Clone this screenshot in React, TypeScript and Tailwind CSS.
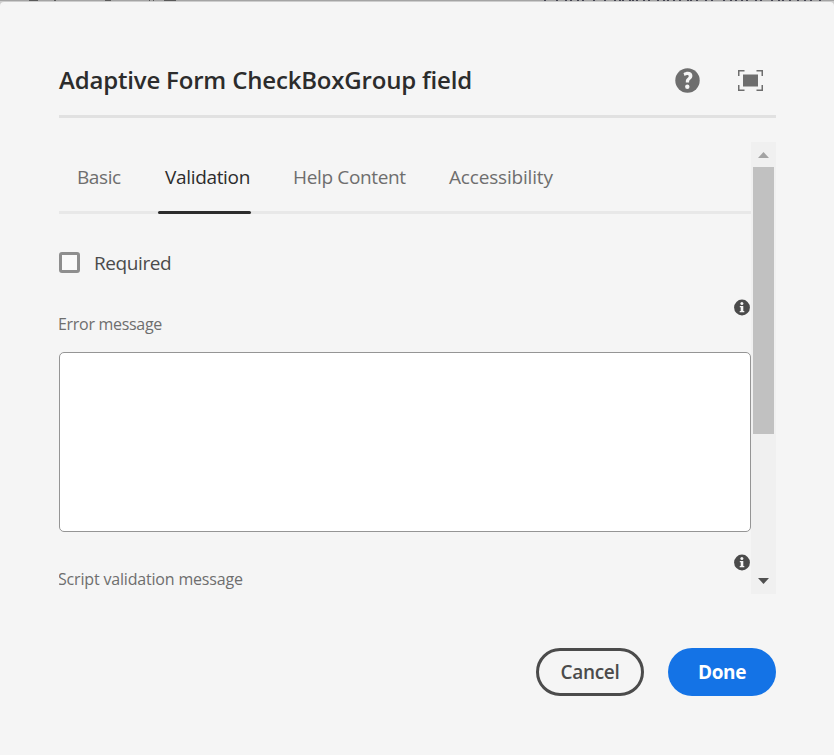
function HelpIcon() {
  return (
    <svg width="25" height="25" viewBox="0 0 25 25" className="block">
      <circle cx="12.5" cy="12.5" r="12.2" fill="#6e6e6e" />
      <path
        d="M8.5 5.3C9.7 4.3 11.2 3.8 12.8 3.8c2.8 0 4.6 1.6 4.6 3.9 0 1.8-.9 2.8-2 3.7-.9.8-1.3 1.3-1.3 2.3v.9h-3.3v-1.2c0-1.7.6-2.5 1.7-3.4.9-.8 1.2-1.1 1.2-1.8 0-.8-.5-1.2-1.4-1.2-.9 0-1.9.4-2.7.9z"
        fill="#f5f5f5"
      />
      <circle cx="12.3" cy="18.8" r="2.2" fill="#f5f5f5" />
    </svg>
  );
}

function FullScreenIcon() {
  return (
    <svg width="25" height="21" viewBox="0 0 25 21" className="block">
      <path d="M.75 6V.75H6.5M18.5.75h5.75V6M24.25 15v5.25H18.5M6.5 20.25H.75V15" fill="none" stroke="#6e6e6e" strokeWidth="1.5" />
      <rect x="5" y="4.5" width="15" height="12" fill="#6e6e6e" />
    </svg>
  );
}

function InfoIcon() {
  return (
    <svg width="16" height="17" viewBox="0 0 16 17" className="block">
      <circle cx="8" cy="8.5" r="7.9" fill="#4b4b4b" />
      <circle cx="7.9" cy="4.5" r="1.5" fill="#f5f5f5" />
      <path d="M5.8 6.9h3.5v5h1v1.4H5.7v-1.4h1V8.3h-.9z" fill="#f5f5f5" />
    </svg>
  );
}

const behindLeft: [number, number][] = [[29, 9], [54, 2], [105, 6], [149, 1], [153, 1], [164, 12]];
const behindRight = [
  544, 556, 565, 570, 577, 582, 593, 604, 614, 619, 622, 629, 632, 636, 643, 648, 657, 663, 667, 673, 679, 687, 690,
  696, 705, 711, 723, 730, 735, 741, 746, 755, 760, 771, 778, 782, 789, 797, 804, 810, 819,
];

function Backdrop() {
  return (
    <div className="h-0.5 w-full bg-[#cdcdcd]">
      <svg width="834" height="1" className="block bg-[#a4a4a4]" shapeRendering="crispEdges">
        {behindLeft.map(([x, w]) => (
          <rect key={x} x={x} y="0" width={w} height="1" fill="#595959" />
        ))}
        {behindRight.map((x) => (
          <rect key={x} x={x} y="0" width="2" height="1" fill="#42424f" />
        ))}
      </svg>
    </div>
  );
}

function Field({ label, tracking }: { label: string; tracking: string }) {
  return (
    <div className="flex h-[37px] items-start justify-between">
      <label className={`-ml-px mt-[13px] text-base leading-6 text-[#6e6e6e] ${tracking}`}>{label}</label>
      <span className="mr-px">
        <InfoIcon />
      </span>
    </div>
  );
}

const tab = "h-full whitespace-nowrap";

export default function App() {
  return (
    <div className="flex h-[755px] w-[834px] flex-col overflow-hidden bg-[#cdcdcd] font-['Open_Sans',sans-serif]">
      <Backdrop />
      <main className="flex-1 rounded-t-sm bg-[#f5f5f5] pl-[59px] pr-[58px] pt-[50px]">
        <header className="flex h-[66px] items-start justify-between border-b-3 border-[#e1e1e1]">
          <h1 className="mt-2.5 whitespace-nowrap text-2xl leading-9 font-semibold tracking-[-0.18px] text-[#2c2c2c]">
            Adaptive Form CheckBoxGroup field
          </h1>
          <div className="mr-[13px] mt-4 flex items-center gap-[38px]">
            <button aria-label="Help"><HelpIcon /></button>
            <button aria-label="Full screen"><FullScreenIcon /></button>
          </div>
        </header>

        <div className="mt-6 flex h-[452px] overflow-hidden">
          <section className="w-[692px]">
            <nav className="flex h-[72px] border-b-3 border-[#e8e8e8] pl-[18px] text-[19px] leading-[70px] text-[#6e6e6e]">
              <span className={`${tab} w-[81px] tracking-[-0.4px]`}>Basic</span>
              <span className="h-[72px] w-[93px] whitespace-nowrap pl-[7px] tracking-[-0.33px] text-[#2c2c2c]">
                Validation
                <span className="-mt-px block h-[3px] rounded-xs bg-[#2c2c2c] -ml-[7px]" />
              </span>
              <span className={`${tab} w-[156px] pl-[42px] tracking-[-0.35px]`}>Help Content</span>
              <span className={`${tab} pl-[42px] tracking-[-0.18px]`}>Accessibility</span>
            </nav>

            <div className="mt-[38px] flex h-[21px] items-center">
              <span className="size-[21px] rounded-[3px] border-3 border-[#8e8e8e] bg-[#fafafa]" />
              <span className="ml-3.5 text-[19px] leading-6 tracking-[-0.4px] text-[#4b4b4b]">Required</span>
            </div>

            <div className="mt-[26px]">
              <Field label="Error message" tracking="tracking-[-0.3px]" />
              <div className="mt-4 h-[180px] rounded-[5px] border border-[#959595] bg-white" />
            </div>
            <div className="mt-[22px]">
              <Field label="Script validation message" tracking="tracking-[-0.18px]" />
            </div>
          </section>

          <aside className="flex w-[25px] flex-col items-center bg-[#f0f0f0]">
            <svg width="11" height="6" className="mt-2.5 block"><path d="M0 6L5.5 0 11 6z" fill="#a3a3a3" /></svg>
            <div className="mt-[9px] h-[267px] w-[21px] bg-[#c1c1c1]" />
            <svg width="11" height="6" className="mt-36 block"><path d="M0 0h11L5.5 6z" fill="#505050" /></svg>
          </aside>
        </div>

        <footer className="mt-[54px] flex justify-end gap-6 text-[19px] leading-[42px] font-bold">
          <button className="h-12 w-[108px] rounded-full border-3 border-[#4b4b4b] font-semibold tracking-[-0.3px] text-[#4b4b4b]">Cancel</button>
          <button className="h-12 w-[108px] rounded-full bg-[#1473e6] tracking-[-0.4px] text-white">Done</button>
        </footer>
      </main>
    </div>
  );
}
